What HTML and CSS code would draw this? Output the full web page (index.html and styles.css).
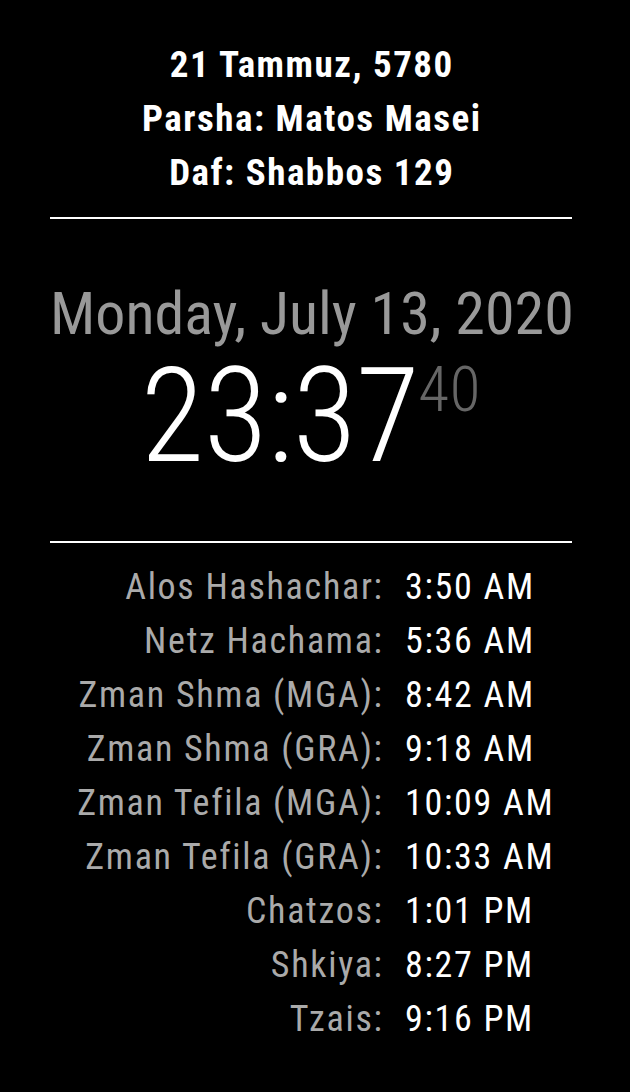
FILE: index.html
```html
<!DOCTYPE html>
<html>
<head>
<meta charset="utf-8">
<link rel="stylesheet" href="styles.css">
</head>
<body>
<div class="region">
  <div class="hebrew">
    <div class="line">21 Tammuz, 5780</div>
    <div class="line">Parsha: Matos Masei</div>
    <div class="line">Daf: Shabbos 129</div>
  </div>
  <hr class="rule">
  <div class="clock">
    <div class="date">Monday, July 13, 2020</div>
    <div class="time"><span class="hm">23:37</span><span class="sec">40</span></div>
  </div>
  <hr class="rule">
  <div class="zmanim">
    <div class="label">Alos Hashachar:</div><div class="value">3:50 AM</div>
    <div class="label">Netz Hachama:</div><div class="value">5:36 AM</div>
    <div class="label">Zman Shma (MGA):</div><div class="value">8:42 AM</div>
    <div class="label">Zman Shma (GRA):</div><div class="value">9:18 AM</div>
    <div class="label">Zman Tefila (MGA):</div><div class="value">10:09 AM</div>
    <div class="label">Zman Tefila (GRA):</div><div class="value">10:33 AM</div>
    <div class="label">Chatzos:</div><div class="value">1:01 PM</div>
    <div class="label">Shkiya:</div><div class="value">8:27 PM</div>
    <div class="label">Tzais:</div><div class="value">9:16 PM</div>
  </div>
</div>
</body>
</html>
```

FILE: styles.css
```css
html, body {
  margin: 0;
  padding: 0;
  background: #000;
}
body {
  font-family: Roboto, "Liberation Sans", sans-serif;
  font-stretch: condensed;
  color: #fff;
}
.region {
  width: 522px;
  margin-left: 50px;
  padding-top: 38px;
}
.hebrew {
  text-align: center;
  font-size: 37px;
  font-weight: 700;
  line-height: 54px;
  letter-spacing: 1.5px;
  text-indent: 1.5px;
}
.rule {
  border: 0;
  height: 2px;
  background: #fff;
  margin: 17px 0;
}
.clock {
  text-align: center;
  padding-top: 48px;
  padding-bottom: 43px;
  white-space: nowrap;
}
.date {
  font-size: 60px;
  line-height: 60px;
  color: #999;
  font-weight: 400;
}
.time {
  line-height: 130px;
  height: 130px;
  margin-top: 7px;
}
.hm {
  font-size: 131px;
  font-weight: 300;
  vertical-align: top;
  letter-spacing: -0.5px;
}
.sec {
  font-size: 63px;
  font-weight: 300;
  color: #666;
  vertical-align: top;
  line-height: 78px;
  margin-left: -1px;
  letter-spacing: 1px;
}
.zmanim {
  display: grid;
  grid-template-columns: 333.7px 1fr;
  column-gap: 21.3px;
  font-size: 36px;
  line-height: 54px;
  font-weight: 400;
  letter-spacing: 1.7px;
}
.label {
  text-align: right;
  color: #aaa;
  white-space: nowrap;
}
.value {
  color: #fff;
  white-space: nowrap;
}
```
